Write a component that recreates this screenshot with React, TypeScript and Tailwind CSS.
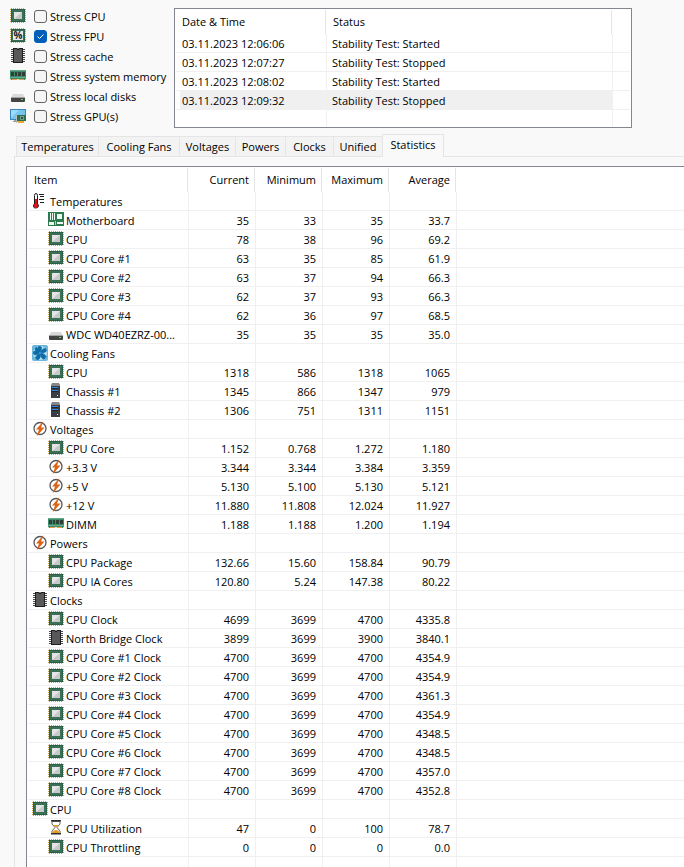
import { useState } from "react";
import type { ReactNode } from "react";
import clsx from "clsx";

type IconName =
  | "cpu" | "fpu" | "chip" | "ram" | "disk" | "gpu"
  | "thermometer" | "board" | "fan" | "tower" | "volt" | "hourglass";

type Row = { icon: IconName; label: string; values?: string[] };

const stressOptions: { id: string; icon: IconName; label: string; on: boolean }[] = [
  { id: "cpu", icon: "cpu", label: "Stress CPU", on: false },
  { id: "fpu", icon: "fpu", label: "Stress FPU", on: true },
  { id: "cache", icon: "chip", label: "Stress cache", on: false },
  { id: "memory", icon: "ram", label: "Stress system memory", on: false },
  { id: "disks", icon: "disk", label: "Stress local disks", on: false },
  { id: "gpu", icon: "gpu", label: "Stress GPU(s)", on: false },
];

const logEntries = [
  { time: "03.11.2023 12:06:06", status: "Stability Test: Started" },
  { time: "03.11.2023 12:07:27", status: "Stability Test: Stopped" },
  { time: "03.11.2023 12:08:02", status: "Stability Test: Started" },
  { time: "03.11.2023 12:09:32", status: "Stability Test: Stopped", selected: true },
];

const tabs = [
  { name: "Temperatures", width: "w-[82px]" },
  { name: "Cooling Fans", width: "w-[81px]" },
  { name: "Voltages", width: "w-14" },
  { name: "Powers", width: "w-[50px]" },
  { name: "Clocks", width: "w-12" },
  { name: "Unified", width: "w-[49px]" },
  { name: "Statistics", width: "w-[62px]" },
];

const rows: Row[] = [
  { icon: "thermometer", label: "Temperatures" },
  { icon: "board", label: "Motherboard", values: ["35", "33", "35", "33.7"] },
  { icon: "cpu", label: "CPU", values: ["78", "38", "96", "69.2"] },
  { icon: "cpu", label: "CPU Core #1", values: ["63", "35", "85", "61.9"] },
  { icon: "cpu", label: "CPU Core #2", values: ["63", "37", "94", "66.3"] },
  { icon: "cpu", label: "CPU Core #3", values: ["62", "37", "93", "66.3"] },
  { icon: "cpu", label: "CPU Core #4", values: ["62", "36", "97", "68.5"] },
  { icon: "disk", label: "WDC WD40EZRZ-00...", values: ["35", "35", "35", "35.0"] },
  { icon: "fan", label: "Cooling Fans" },
  { icon: "cpu", label: "CPU", values: ["1318", "586", "1318", "1065"] },
  { icon: "tower", label: "Chassis #1", values: ["1345", "866", "1347", "979"] },
  { icon: "tower", label: "Chassis #2", values: ["1306", "751", "1311", "1151"] },
  { icon: "volt", label: "Voltages" },
  { icon: "cpu", label: "CPU Core", values: ["1.152", "0.768", "1.272", "1.180"] },
  { icon: "volt", label: "+3.3 V", values: ["3.344", "3.344", "3.384", "3.359"] },
  { icon: "volt", label: "+5 V", values: ["5.130", "5.100", "5.130", "5.121"] },
  { icon: "volt", label: "+12 V", values: ["11.880", "11.808", "12.024", "11.927"] },
  { icon: "ram", label: "DIMM", values: ["1.188", "1.188", "1.200", "1.194"] },
  { icon: "volt", label: "Powers" },
  { icon: "cpu", label: "CPU Package", values: ["132.66", "15.60", "158.84", "90.79"] },
  { icon: "cpu", label: "CPU IA Cores", values: ["120.80", "5.24", "147.38", "80.22"] },
  { icon: "chip", label: "Clocks" },
  { icon: "cpu", label: "CPU Clock", values: ["4699", "3699", "4700", "4335.8"] },
  { icon: "chip", label: "North Bridge Clock", values: ["3899", "3699", "3900", "3840.1"] },
  { icon: "cpu", label: "CPU Core #1 Clock", values: ["4700", "3699", "4700", "4354.9"] },
  { icon: "cpu", label: "CPU Core #2 Clock", values: ["4700", "3699", "4700", "4354.9"] },
  { icon: "cpu", label: "CPU Core #3 Clock", values: ["4700", "3699", "4700", "4361.3"] },
  { icon: "cpu", label: "CPU Core #4 Clock", values: ["4700", "3699", "4700", "4354.9"] },
  { icon: "cpu", label: "CPU Core #5 Clock", values: ["4700", "3699", "4700", "4348.5"] },
  { icon: "cpu", label: "CPU Core #6 Clock", values: ["4700", "3699", "4700", "4348.5"] },
  { icon: "cpu", label: "CPU Core #7 Clock", values: ["4700", "3699", "4700", "4357.0"] },
  { icon: "cpu", label: "CPU Core #8 Clock", values: ["4700", "3699", "4700", "4352.8"] },
  { icon: "cpu", label: "CPU" },
  { icon: "hourglass", label: "CPU Utilization", values: ["47", "0", "100", "78.7"] },
  { icon: "cpu", label: "CPU Throttling", values: ["0", "0", "0", "0.0"] },
];

const processorBody = (
  <>
    <path d="M1 .5h14M1 14.500h14M.5 1v13M15.500 1v13" fill="none" stroke="#c9a54e" strokeDasharray="1 1" />
    <rect x="1" y="1" width="14" height="13" fill="#2c5f47" />
    <rect x="2" y="2" width="12" height="11" fill="#3a7055" />
  </>
);

const drawings: Record<IconName, ReactNode> = {
  cpu: (
    <>
      {processorBody}
      <rect x="4" y="4" width="8" height="7" fill="#c6c9c7" />
      <path d="M4 4h8L4 11z" fill="#e4e4e4" />
    </>
  ),
  fpu: (
    <>
      {processorBody}
      <rect x="3" y="3" width="10" height="9" fill="#e8e8e8" />
      <text x="8" y="11" fontSize="10" fontWeight="700" textAnchor="middle" fill="#1c1c1c">%</text>
    </>
  ),
  chip: (
    <>
      <path d="M1 1.500h14M1 3.500h14M1 5.500h14M1 7.500h14M1 9.500h14M1 11.500h14M1 13.500h14" stroke="#4a4a4a" />
      <path d="M3 0h4q1 1.500 2 0h4v15H3z" fill="#1f1f1f" />
      <path d="M4 1h2.500Q8 3.500 9.500 1H12v13H4z" fill="#59595c" />
    </>
  ),
  ram: (
    <>
      <path d="M0 2h16v10H0z" fill="#3f8a6a" />
      <path d="M0 2h16v1H0zM0 9h16v1H0z" fill="#62a989" />
      <path d="M1 4h3v4H1zM5 4h2v4H5zM8 4h3v4H8zM12 4h3v4h-3z" fill="#2c4038" />
      <path d="M2 11h5v1H2zM9 11h5v1H9z" fill="#e39a4e" />
      <path d="M0 11h1v1H0zM7 11h2v1H7zM15 11h1v1h-1z" fill="#d4e6dc" />
    </>
  ),
  disk: (
    <>
      <path d="M3 6h10l2 4H1z" fill="#d9d9d9" />
      <path d="M1 10h14v3q0 1-1 1H2q-1 0-1-1z" fill="#444" />
      <path d="M1 9h14v1H1z" fill="#a5a5a5" />
      <path d="M11 11h2v1h-2z" fill="#4fe04a" />
    </>
  ),
  gpu: (
    <>
      <rect x="0" y="1" width="16" height="11" fill="#3d86bd" />
      <rect x="1" y="2" width="14" height="9" fill="#74c6f1" />
      <path d="M1 2h8L1 10z" fill="#9adafa" />
      <path d="M4 12h3v1h1v1H3v-1h1z" fill="#8fa0ad" />
      <path d="M6 7h10v6H6z" fill="#2f6d50" />
      <path d="M6 7h1v8H6z" fill="#b4bcc0" />
      <rect x="10" y="8" width="4" height="4" fill="#6f9d87" />
      <rect x="11" y="9" width="2" height="2" fill="#34564a" />
      <path d="M8 13h6v2H8z" fill="#efa82f" />
    </>
  ),
  thermometer: (
    <>
      <path d="M2.500 11V2.500q0-2 1.500-2t1.500 2V11q1 .5 1 2T4 15 1.500 13q0-1.500 1-2z" fill="#fff" stroke="#1d1d1d" />
      <path d="M3 6h2v5h1v3H5v1H3v-1H2v-3h1z" fill="#e30f16" />
      <path d="M7 1.500h5M8 3.500h4M7 6.500h5M8 9.500h4" stroke="#1d1d1d" />
    </>
  ),
  board: (
    <>
      <path d="M0 0h16v14H0z" fill="#2d7a4c" />
      <path d="M2 1h1v7H2zM4 1h1v7H4zM6 1h1v7H6zM9 2h5v5H9zM1 10h5v3H1zM9 10h6v2H9z" fill="#eff8f2" />
      <path d="M7 9h1v4H7z" fill="#a9d0b8" />
    </>
  ),
  fan: (
    <>
      <rect x="0" y="0" width="16" height="16" rx="2" fill="#6db5d9" />
      <circle cx="8" cy="8" r="7" fill="#b6def0" />
      <path
        d="M8 8Q4.500 4 6.500 1.500 9 1 9.500 2.500 9.500 5 8 8 10.500 3 13.500 3.500q1.500 2 .5 3Q12 8 8 8q5 .5 6 3.500-1 2.500-3 2.500Q8.500 12 8 8q1 5-1.500 6.500Q4 15 3.500 12.500 5 9.500 8 8 3.500 11 1.500 9 1 6.500 2.500 6 5 6 8 8 3 6.500 3 4q.5-2 2-1.500Q7 4.500 8 8z"
        fill="#0d6ca8"
        stroke="#0d6ca8"
        strokeWidth="0.8"
      />
      <circle cx="8" cy="8" r="1.200" fill="#3d96c8" />
    </>
  ),
  tower: (
    <>
      <path d="M3 2h9v13H3z" fill="#3b3d44" />
      <path d="M4 0h7l1 2v1H3V2z" fill="#85878d" />
      <path d="M4 4h6v1H4zM4 7h6v1H4z" fill="#2f8ceb" />
      <path d="M4 5h6v1H4zM4 8h6v1H4z" fill="#1e2026" />
      <path d="M9 12h1v1H9z" fill="#c8f4ff" />
    </>
  ),
  volt: (
    <>
      <circle cx="8" cy="7.500" r="6" fill="#fff" stroke="#57575b" strokeWidth="1.300" />
      <path d="M11.500 0 4 8.500h3L4.500 15.500 12.500 6.500H9z" fill="#dc6414" />
    </>
  ),
  hourglass: (
    <>
      <path d="M4 1.500V4L7 7.500l-3 3.500v2.500h8V11L9 7.500 12 4V1.500z" fill="#fff" stroke="#666" />
      <path d="M5.500 5h5L8 7.500zM4.500 13q.5-3 3.500-3t3.500 3z" fill="#e79b1d" />
      <path d="M3 0h10v1.500H3zM3 13h10v1.500H3z" fill="#2f2f2f" />
    </>
  ),
};

function Icon({ name }: { name: IconName }) {
  return (
    <svg viewBox="0 0 16 16" className="size-4 shrink-0" aria-hidden="true">
      {drawings[name]}
    </svg>
  );
}

function HeaderCell({ children, right }: { children?: ReactNode; right?: boolean }) {
  return (
    <th scope="col" className="p-0 font-normal">
      <div className={clsx("mr-px h-6 border-r border-[#e5e5e5] leading-6", right ? "pr-[5px] text-right" : "pl-1.5 text-left")}>
        {children}
      </div>
    </th>
  );
}

function StressOptions() {
  return (
    <div className="w-[164px] shrink-0">
      {stressOptions.map((option) => (
        <div key={option.id} className="flex h-5 items-start">
          <div className="mt-px mr-2">
            <Icon name={option.icon} />
          </div>
          <label className="flex items-start gap-[3px] leading-5 whitespace-nowrap">
            <span className="relative mt-[3px] block size-[13px]">
              <input
                type="checkbox"
                defaultChecked={option.on}
                className="peer block size-[13px] appearance-none rounded-[3px] border border-[#626262] bg-[#f5f5f5] checked:border-[#005fb8] checked:bg-[#005fb8]"
              />
              <svg viewBox="0 0 13 13" className="pointer-events-none absolute inset-0 hidden size-[13px] peer-checked:block">
                <path d="M3.500 6.500l2 2 4-4" fill="none" stroke="#fff" />
              </svg>
            </span>
            {option.label}
          </label>
        </div>
      ))}
    </div>
  );
}

function EventLog() {
  return (
    <div className="mt-px mr-13 flex-1 border border-[#828790] bg-white p-px">
      <table className="w-full table-fixed border-separate border-spacing-0">
        <colgroup>
          <col className="w-[151px]" />
          <col />
          <col className="w-[17px]" />
        </colgroup>
        <thead>
          <tr>
            <HeaderCell>Date &amp; Time</HeaderCell>
            <HeaderCell>Status</HeaderCell>
            <td className="p-0" />
          </tr>
        </thead>
        <tbody>
          {logEntries.map((entry) => (
            <tr key={entry.time} className="leading-4">
              <td className="border-r border-b border-[#f0f0f0] p-0">
                <div className={clsx("ml-1 pt-0.5 pl-0.5", entry.selected && "bg-[#f0f0f0]")}>{entry.time}</div>
              </td>
              <td className={clsx("border-r border-b border-[#f0f0f0] pt-0.5 pr-0 pb-0 pl-[5px]", entry.selected && "bg-[#f0f0f0]")}>
                {entry.status}
              </td>
              <td className="border-b border-[#f0f0f0] p-0" />
            </tr>
          ))}
          <tr className="h-4">
            <td className="border-r border-[#f0f0f0] p-0" />
            <td className="border-r border-[#f0f0f0] p-0" />
            <td className="p-0" />
          </tr>
        </tbody>
      </table>
    </div>
  );
}

function StatisticsTable() {
  return (
    <div className="flex flex-1 flex-col border-t border-l border-[#828790] bg-white pt-px pl-px">
      <table className="w-full flex-1 table-fixed border-separate border-spacing-0">
        <colgroup>
          <col className="w-[161px]" />
          <col className="w-[67px]" />
          <col className="w-[67px]" />
          <col className="w-[67px]" />
          <col className="w-[67px]" />
          <col />
        </colgroup>
        <thead>
          <tr>
            <HeaderCell>Item</HeaderCell>
            <HeaderCell right>Current</HeaderCell>
            <HeaderCell right>Minimum</HeaderCell>
            <HeaderCell right>Maximum</HeaderCell>
            <HeaderCell right>Average</HeaderCell>
            <td className="p-0" />
          </tr>
        </thead>
        <tbody>
          {rows.map((row, i) => (
            <tr key={i} className="leading-4">
              <td className="border-r border-b border-[#f0f0f0] p-0">
                <div className={clsx("flex h-[18px] items-center gap-0.5 whitespace-nowrap", row.values ? "pl-5" : "pl-1")}>
                  <Icon name={row.icon} />
                  <span className="pt-0.5">{row.label}</span>
                </div>
              </td>
              {[0, 1, 2, 3].map((n) => (
                <td key={n} className="border-r border-b border-[#f0f0f0] pt-0.5 pr-1.5 pb-0 pl-0 text-right">
                  {row.values?.[n]}
                </td>
              ))}
              <td className="border-b border-[#f0f0f0] p-0" />
            </tr>
          ))}
          <tr className="h-2.5">
            {[0, 1, 2, 3, 4].map((n) => (
              <td key={n} className="border-r border-[#f0f0f0] p-0" />
            ))}
            <td className="p-0" />
          </tr>
        </tbody>
      </table>
    </div>
  );
}

export default function App() {
  const [active, setActive] = useState("Statistics");

  return (
    <div className="flex min-h-screen flex-col overflow-hidden bg-[#f9f9f9] font-['Open_Sans','Noto_Sans',sans-serif] text-[11px] text-black">
      <div className="flex pt-[7px] pl-2.5">
        <StressOptions />
        <EventLog />
      </div>

      {/* Tab strip */}
      <div className="mt-1.5 ml-4 flex items-end" role="tablist">
        {tabs.map((tab) => {
          const selected = tab.name === active;
          return (
            <button
              key={tab.name}
              type="button"
              role="tab"
              aria-selected={selected}
              onClick={() => setActive(tab.name)}
              className={clsx(
                "flex justify-center border-t border-l border-[#e5e5e5] leading-5 whitespace-nowrap",
                tab.width,
                selected ? "z-10 -mb-px h-[23px] border-r bg-[#f9f9f9]" : "h-5 bg-[#f3f3f3]"
              )}
            >
              {tab.name}
            </button>
          );
        })}
      </div>

      <div className="ml-3.5 flex flex-1 flex-col border-t border-l border-[#e5e5e5] pt-[9px] pl-[11px]">
        <StatisticsTable />
      </div>
    </div>
  );
}
